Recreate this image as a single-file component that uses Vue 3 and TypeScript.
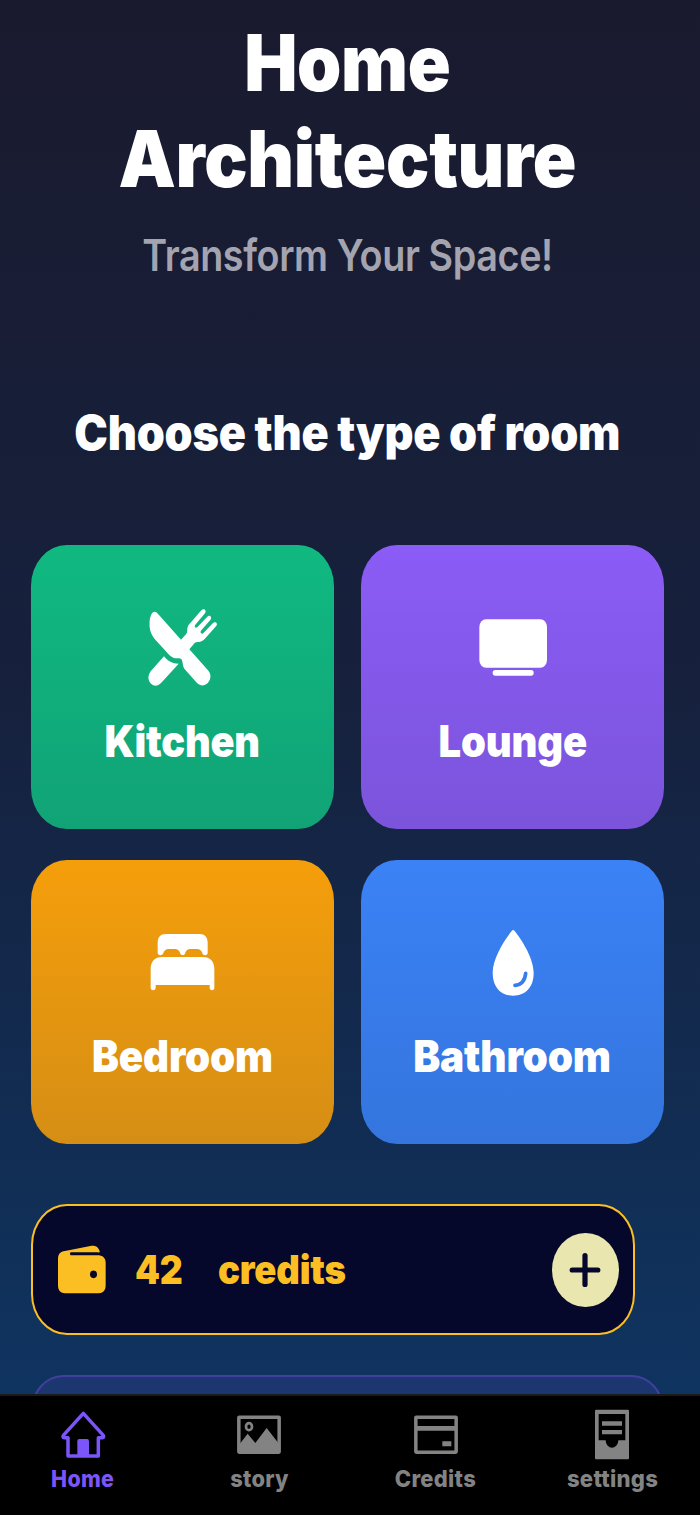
<script setup lang="ts">
interface Room {
  id: string
  name: string
}

interface Tab {
  id: string
  label: string
  active: boolean
}

const rooms: Room[] = [
  { id: 'kitchen', name: 'Kitchen' },
  { id: 'lounge', name: 'Lounge' },
  { id: 'bedroom', name: 'Bedroom' },
  { id: 'bathroom', name: 'Bathroom' },
]

const tabs: Tab[] = [
  { id: 'home', label: 'Home', active: true },
  { id: 'story', label: 'story', active: false },
  { id: 'credits', label: 'Credits', active: false },
  { id: 'settings', label: 'settings', active: false },
]

const credits = 42
</script>

<template>
  <div class="screen">
    <main class="content">
      <header class="header">
        <h1 class="title">
          <span class="fit title-first">Home</span>
          <span class="fit title-second">Architecture</span>
        </h1>
        <p class="subtitle"><span class="fit">Transform Your Space!</span></p>
      </header>

      <h2 class="prompt"><span class="fit">Choose the type of room</span></h2>

      <section class="rooms">
        <button v-for="room in rooms" :key="room.id" type="button" class="room" :class="room.id">
          <svg class="room-icon" viewBox="344 195 288 288" fill="#fff">
            <template v-if="room.id === 'kitchen'">
              <path d="M403 230C407 230 411 234 414 238L482 314L497 298C502 292 500 283 502 276C504 270 508 266 512 262L543 226C551 218 560 227 554 235L525 269C520 276 526 281 532 275L561 245C568 238 577 247 570 255L543 286C537 293 544 300 550 293L578 264C586 257 594 266 587 274L555 310C548 318 542 321 534 321C524 321 522 325 518 330L507 343L563 406C585 431 553 467 530 444L496 406C486 395 489 388 485 376C482 370 478 370 470 370C455 371 445 358 436 348L405 314C391 297 386 282 388 257C389 245 394 230 403 230Z" />
              <path d="M431 364C443 379 455 386 475 386L425 441C414 454 402 455 392 446C382 437 382 422 391 409Z" />
            </template>
            <template v-else-if="room.id === 'lounge'">
              <rect x="387" y="253" width="203" height="145" rx="20" ry="23" />
              <rect x="427" y="405" width="123" height="17" rx="8" />
            </template>
            <template v-else-if="room.id === 'bedroom'">
              <path d="M412 309V278C412 262 421 252 436 252H538C553 252 562 262 562 278V309C562 318 546 317 546 309C543 301 538 297 530 297H512C501 297 496 303 494 311C492 316 482 316 480 311C478 303 473 297 462 297H445C437 297 432 301 429 309C428 317 412 318 412 309Z" />
              <path d="M391 413V356C391 334 405 321 424 321H549C568 321 582 334 582 356V413C582 423 568 423 568 413V405H406V413C406 423 391 423 391 413Z" />
            </template>
            <template v-else>
              <path d="M484 243Q488.500 237 493 243C518 275 550 326 550 369C550 411 526 437 488.500 437C451 437 427 411 427 369C427 326 459 275 484 243Z" />
              <path class="drop-shine" d="M526 370C524 391 514 404 494 406" />
            </template>
          </svg>
          <span class="room-name fit">{{ room.name }}</span>
        </button>
      </section>

      <section class="wallet">
        <svg class="wallet-icon" viewBox="108 160 156 156">
          <path fill="#fbbf24" d="M114 205C114 190 121 183 135 181L211 166C228 163 235 170 239 182C240 186 237 186 234 185H154C148 185 149 194 154 194H236C249 195 257 203 257 216V284C257 300 249 308 236 308H135C122 308 114 300 114 284Z" />
          <ellipse cx="220.500" cy="251" rx="10.500" ry="11.500" fill="#06082b" />
        </svg>
        <span class="amount fit">{{ credits }}</span>
        <span class="unit fit">credits</span>
        <button type="button" class="add" aria-label="Add credits">
          <svg class="add-icon" viewBox="0 0 32 36">
            <path d="M3.200 18H28.800M16 3.500V32.500" />
          </svg>
        </button>
      </section>

      <section class="next-card"></section>
    </main>

    <nav class="tabs">
      <a v-for="tab in tabs" :key="tab.id" class="tab" :class="['tab-' + tab.id, { active: tab.active }]">
        <svg v-if="tab.id === 'home'" class="tab-icon" viewBox="176 65 144 165">
          <path class="line" d="M249 84L309 150Q312 157 306 157H294V212H203V157H192Q186 157 189 150Z" />
          <path d="M231 212V168Q231 161 237 161H260Q266 161 266 168V212Z" />
        </svg>
        <svg v-else-if="tab.id === 'story'" class="tab-icon" viewBox="706 65 144 165">
          <rect class="line" x="717.500" y="95.500" width="121" height="105" rx="1" />
          <path d="M720 176L744 145L767 173L801 128L836 173V203H720Z" />
          <ellipse class="line ring" cx="748" cy="124" rx="9" ry="10.500" />
        </svg>
        <svg v-else-if="tab.id === 'credits'" class="tab-icon" viewBox="185 65 144 165">
          <rect class="line" x="196.500" y="95.500" width="121" height="105" rx="1" />
          <path d="M196 122H318V136H196ZM276 168H303V183H276Z" />
        </svg>
        <svg v-else class="tab-icon" viewBox="715 65 144 165">
          <path fill-rule="evenodd" d="M739 73H835Q838 73 838 77V218Q838 222 835 222H739Q736 222 736 218V77Q736 73 739 73ZM747 86V165H768C769 180 778 187 787 187C796 187 805 180 806 165H827V86ZM757 108H817V121H757ZM757 134H817V147H757Z" />
        </svg>
        <span class="tab-label fit">{{ tab.label }}</span>
      </a>
    </nav>
  </div>
</template>

<style>
html,
body {
  margin: 0;
  background: #000;
}
</style>

<style scoped>
.screen {
  display: flex;
  flex-direction: column;
  width: 700px;
  height: 1515px;
  overflow: hidden;
  background: linear-gradient(180deg, #1a1a2e 0, #16213e 700px, #0f3460 1400px);
  font-family: Inter, "Liberation Sans", sans-serif;
  color: #fff;
}

.content {
  display: flex;
  flex-direction: column;
  flex: none;
  box-sizing: border-box;
  height: 1394px;
  padding: 15px 36px 0 31px;
  overflow: hidden;
}

.header,
.prompt {
  text-align: center;
}

.fit {
  display: inline-block;
  white-space: nowrap;
  transform: scaleX(var(--sx, 1));
}

.title {
  display: flex;
  flex-direction: column;
  align-items: center;
  margin: 0;
  font-size: 78px;
  line-height: 96px;
  font-weight: 900;
  letter-spacing: -0.005em;
}

.title-first {
  --sx: 0.91;
}

.title-second {
  --sx: 0.925;
}

.subtitle {
  --sx: 0.857;
  margin: 18px 0 0;
  font-size: 44px;
  line-height: 60px;
  font-weight: 600;
  letter-spacing: -0.01em;
  color: #a3a4af;
}

.prompt {
  --sx: 0.937;
  margin: 118px 0 0;
  font-size: 48px;
  line-height: 60px;
  font-weight: 900;
  letter-spacing: -0.005em;
}

.rooms {
  display: grid;
  grid-template-columns: 303px 303px;
  gap: 31px 27px;
  margin-top: 81.500px;
}

.room {
  display: flex;
  flex-direction: column;
  align-items: center;
  box-sizing: border-box;
  height: 284px;
  padding: 55.500px 0 0;
  border: 0;
  border-radius: 36px / 41px;
  font-family: inherit;
  color: inherit;
}

.kitchen {
  --sx: 0.911;
  background: linear-gradient(180deg, #10b981, #11a376);
}

.lounge {
  --sx: 0.918;
  background: linear-gradient(180deg, #8b5cf6, #7b54db);
}

.bedroom {
  --sx: 0.927;
  background: linear-gradient(180deg, #f59e0b, #d58e15);
}

.bathroom {
  --sx: 0.932;
  background: linear-gradient(180deg, #3b82f6, #3475de);
}

.room-icon {
  flex: none;
  width: 96px;
  height: 96px;
}

.drop-shine {
  fill: none;
  stroke: #387ced;
  stroke-width: 11;
  stroke-linecap: round;
}

.room-name {
  margin-top: 15px;
  font-size: 43.500px;
  line-height: 60px;
  font-weight: 900;
  letter-spacing: -0.005em;
}

.wallet {
  display: flex;
  flex: none;
  align-items: center;
  box-sizing: border-box;
  width: 604px;
  height: 131px;
  margin-top: 60.500px;
  padding: 0 14.500px 0 23px;
  border: 2px solid #fbbf24;
  border-radius: 36px / 41px;
  background: #06082b;
  color: #fbbf24;
  font-size: 39.500px;
  font-weight: 900;
  letter-spacing: -0.005em;
}

.wallet-icon {
  width: 52px;
  height: 52px;
}

.amount {
  --sx: 0.9;
  margin-left: 26.500px;
  transform-origin: left;
}

.unit {
  --sx: 0.925;
  margin-left: 31px;
  transform-origin: left;
}

.add {
  display: flex;
  align-items: center;
  justify-content: center;
  width: 66.500px;
  height: 74px;
  margin-left: auto;
  padding: 0;
  border: 0;
  border-radius: 50%;
  background: #e9e6b0;
}

.add-icon {
  width: 32px;
  height: 36px;
  fill: none;
  stroke: #06082b;
  stroke-width: 5.200;
  stroke-linecap: round;
}

.next-card {
  box-sizing: border-box;
  flex: none;
  width: 633px;
  height: 120px;
  margin-top: 40px;
  border: 2px solid #433f9e;
  border-radius: 32px / 36px;
  background: #1c376f;
}

.tabs {
  display: grid;
  grid-template-columns: repeat(4, 176.500px);
  box-sizing: border-box;
  height: 121px;
  padding-top: 11px;
  border-top: 2px solid #1a1a1b;
  background: #000;
}

.tab {
  position: relative;
  left: -5.500px;
  display: flex;
  flex-direction: column;
  align-items: center;
  color: #838383;
}

.tab.active {
  color: #7c55fa;
}

.tab-home {
  --sx: 0.91;
}

.tab-story {
  --sx: 0.93;
}

.tab-credits {
  --sx: 0.935;
}

.tab-settings {
  --sx: 0.94;
}

.tab-icon {
  width: 48px;
  height: 55px;
  fill: currentColor;
}

.line {
  fill: none;
  stroke: currentColor;
  stroke-width: 10.500;
  stroke-linejoin: round;
}

.ring {
  stroke-width: 8;
}

.tab-label {
  margin-top: 1px;
  font-size: 23.500px;
  line-height: 32px;
  font-weight: 800;
  letter-spacing: 0.3px;
}
</style>
